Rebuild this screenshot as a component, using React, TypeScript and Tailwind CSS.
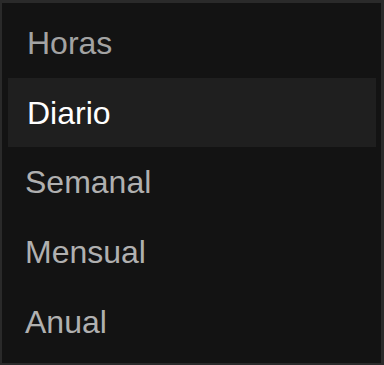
import React from "react";

const items = [
  { label: "Horas", h: "h-[70px]", pl: "pl-[19px]", active: false, color: "text-[#a3a3a3]" },
  { label: "Diario", h: "h-[69px]", pl: "pl-[19px]", active: true, color: "text-white" },
  { label: "Semanal", h: "h-[70px]", pl: "pl-[17px]", active: false, color: "text-[#b0b0b0]" },
  { label: "Mensual", h: "h-[69px]", pl: "pl-[17px]", active: false, color: "text-[#b0b0b0]" },
  { label: "Anual", h: "h-[71px]", pl: "pl-[17px]", active: false, color: "text-[#b0b0b0]" },
];

export default function App() {
  return (
    <div
      className="w-[384px] h-[365px] bg-[#131313] border-t-[3px] border-l-2 border-r-[3px] border-b-2 border-[#2a2a2a] pt-[5px] pl-[6px] pr-[5px] flex flex-col"
      style={{ fontFamily: '"Liberation Sans", Arial, sans-serif' }}
    >
      {items.map((it) => (
        <div
          key={it.label}
          className={`${it.h} ${it.pl} flex items-center ${it.active ? "bg-[#1f1f1f]" : ""}`}
        >
          <span className={`text-[32px] leading-none ${it.color}`}>{it.label}</span>
        </div>
      ))}
    </div>
  );
}
